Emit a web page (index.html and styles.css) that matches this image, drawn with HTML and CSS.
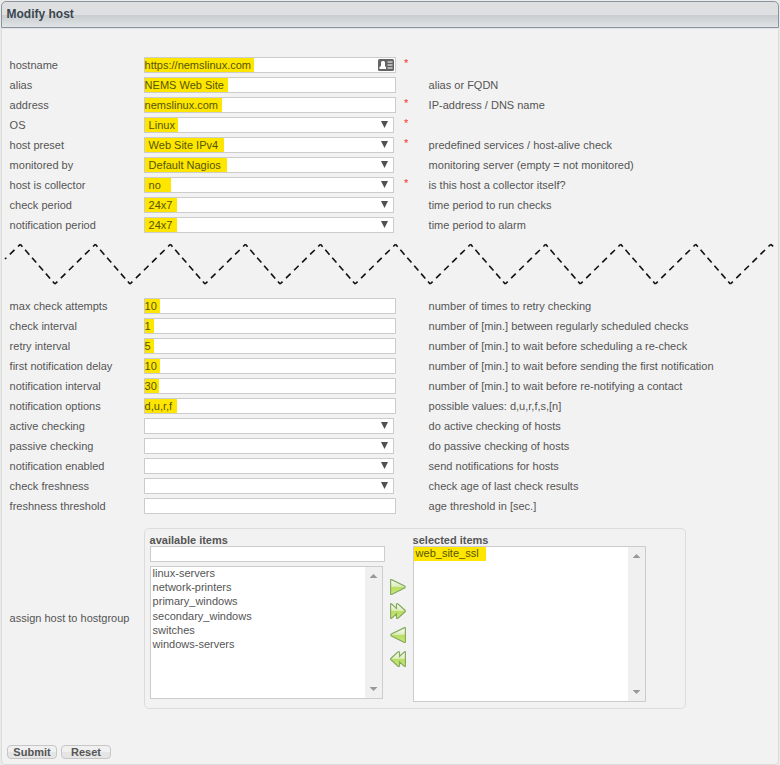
FILE: index.html
```html
<!DOCTYPE html>
<html lang="en">
<head>
<meta charset="utf-8">
<title>Modify host</title>
<link rel="stylesheet" href="styles.css">
</head>
<body>
<main class="panel">
<h1 class="head">Modify host</h1>
<form class="body">
<section class="rows">
<div class="row"><label>hostname</label><div class="input"><mark class="w109">https://nemslinux.com</mark><svg class="card" width="16" height="12" viewBox="0 0 16 12"><rect width="16" height="12" rx="1.5" fill="#646464"/><path d="M1.5 10V8L3 7V3.2L4 2h2l1 1.2V7L8 8v2zM9.5 2.5h5v1h-5zM9.5 5.5h5v1h-5zM9.5 8.5h5v1h-5z" fill="#fff"/></svg></div><b>*</b><span></span></div>
<div class="row"><label>alias</label><div class="input"><mark class="w83">NEMS Web Site</mark></div><b></b><span>alias or FQDN</span></div>
<div class="row"><label>address</label><div class="input"><mark class="w77">nemslinux.com</mark></div><b>*</b><span>IP-address / DNS name</span></div>
<div class="row"><label>OS</label><div class="input select"><mark class="w33">Linux</mark></div><b>*</b><span></span></div>
<div class="row"><label>host preset</label><div class="input select"><mark class="w79">Web Site IPv4</mark></div><b>*</b><span>predefined services / host-alive check</span></div>
<div class="row"><label>monitored by</label><div class="input select"><mark class="w82">Default Nagios</mark></div><b></b><span>monitoring server (empty = not monitored)</span></div>
<div class="row"><label>host is collector</label><div class="input select"><mark class="w26">no</mark></div><b>*</b><span>is this host a collector itself?</span></div>
<div class="row"><label>check period</label><div class="input select"><mark class="w32">24x7</mark></div><b></b><span>time period to run checks</span></div>
<div class="row"><label>notification period</label><div class="input select"><mark class="w32">24x7</mark></div><b></b><span>time period to alarm</span></div>
</section>
<svg class="zigzag" width="776" height="61" viewBox="2 235 776 61"></svg>
<section class="rows">
<div class="row"><label>max check attempts</label><div class="input"><mark class="w15">10</mark></div><b></b><span>number of times to retry checking</span></div>
<div class="row"><label>check interval</label><div class="input"><mark class="w9">1</mark></div><b></b><span>number of [min.] between regularly scheduled checks</span></div>
<div class="row"><label>retry interval</label><div class="input"><mark class="w9">5</mark></div><b></b><span>number of [min.] to wait before scheduling a re-check</span></div>
<div class="row"><label>first notification delay</label><div class="input"><mark class="w15">10</mark></div><b></b><span>number of [min.] to wait before sending the first notification</span></div>
<div class="row"><label>notification interval</label><div class="input"><mark class="w14">30</mark></div><b></b><span>number of [min.] to wait before re-notifying a contact</span></div>
<div class="row"><label>notification options</label><div class="input"><mark class="w32">d,u,r,f</mark></div><b></b><span>possible values: d,u,r,f,s,[n]</span></div>
<div class="row"><label>active checking</label><div class="input select"></div><b></b><span>do active checking of hosts</span></div>
<div class="row"><label>passive checking</label><div class="input select"></div><b></b><span>do passive checking of hosts</span></div>
<div class="row"><label>notification enabled</label><div class="input select"></div><b></b><span>send notifications for hosts</span></div>
<div class="row"><label>check freshness</label><div class="input select"></div><b></b><span>check age of last check results</span></div>
<div class="row"><label>freshness threshold</label><div class="input"></div><b></b><span>age threshold in [sec.]</span></div>
</section>
<section class="assign">
<label>assign host to hostgroup</label>
<div class="box">
<div class="available"><strong>available items</strong><div class="input search"></div>
<div class="list"><ul><li>linux-servers</li><li>network-printers</li><li>primary_windows</li><li>secondary_windows</li><li>switches</li><li>windows-servers</li></ul><div class="scroll"><i></i><i class="down"></i></div></div></div>
<div class="arrows">
<svg width="16" height="16" viewBox="0 0 16 16"><defs><linearGradient id="g" x1="0" y1="0" x2="0" y2="1"><stop offset="0" stop-color="#fff"/><stop offset=".48" stop-color="#d9ecb4"/><stop offset=".5" stop-color="#b9de60"/><stop offset="1" stop-color="#c9e87c"/></linearGradient></defs><path id="one" d="M.6 1Q.6 .3 1.5 .6L14.6 7Q15.7 8 14.6 9L1.5 15.5Q.6 15.8 .6 15Z"/></svg>
<svg width="16" height="16" viewBox="0 0 16 16"><path id="two" d="M.6 1Q.7 .4 1.4 .8L6.5 5.5V1Q7 .3 8 1L15 7.2Q15.8 8 15 8.8L8 15.3Q7 15.8 6.5 15V10.8L1.4 15.4Q.7 15.8 .6 15Z"/></svg>
<svg width="16" height="16" viewBox="0 0 16 16"><use href="#one" transform="matrix(-1 0 0 1 16 0)"/></svg>
<svg width="16" height="16" viewBox="0 0 16 16"><use href="#two" transform="matrix(-1 0 0 1 16 0)"/></svg>
</div>
<div class="selected"><strong>selected items</strong>
<div class="list"><ul><li><mark>web_site_ssl</mark></li></ul><div class="scroll"><i></i><i class="down"></i></div></div></div>
</div>
</section>
<div class="buttons"><button type="button">Submit</button><button type="button">Reset</button></div>
</form>
</main>
<script src="zigzag.js"></script>
</body>
</html>
```
FILE: zigzag.js
```js
// Each slope is its own subpath so that a dash is centred on every corner.
const period = 75.05, top0 = 244.3, bottom0 = 284;
let up = "M20.3 244.3L5 259", down = "";
for (let i = 0; i < 10; i++) {
  const x = 20.3 + i * period;
  down += `M${x} ${top0}L${x + 34.6} ${bottom0}`;
  up += `M${x + period} ${top0}L${x + 34.6} ${bottom0}`;
}
down += "M770.8 244.3L776 249";
document.querySelector(".zigzag").innerHTML =
  `<path class="up" d="${up}"/><path class="down" d="${down}"/>`;
```
FILE: styles.css
```css
* { box-sizing: border-box; }
body { margin: 0; padding: 1px; background: #e9ebe8; font: 11px/20px "Liberation Sans", Arial, sans-serif; color: #555; }
.panel { height: 764px; width: 778px; }
.head { margin: 0; height: 27px; padding-left: 4.5px; border: 1px solid #8c92a0; border-radius: 5px 5px 0 0; background: linear-gradient(#dddfe1 0 13px, #c8cccf 13px, #e1e6e8 26px); font-size: 12px; line-height: 24px; font-weight: bold; color: #3c4650; }
.body { height: 737px; margin: 0; padding-top: 27px; border: 1px solid #dcdcdc; border-top-color: #e0e3e3; border-radius: 0 0 5px 5px; background: #f2f2f2; display: flex; flex-direction: column; }
.rows { padding-left: 8px; margin-top: -1px; }
.row { display: grid; grid-template-columns: 134px 260px 25px 1fr; height: 20px; }
.row label, .row span, .assign label { text-indent: -.4px; }
.row b { color: #f32; font-weight: normal; line-height: 16px; }
.input { width: 252px; height: 16px; margin-top: 2px; border: 1px solid #ccc; background: #fff; display: flex; line-height: 15px; }
.select { width: 250px; justify-content: space-between; }
.select::after { content: ""; width: 7px; height: 7px; margin: 3px 5px 0 auto; background: #505050; clip-path: polygon(0 0, 100% 0, 50% 100%); }
mark { background: #ffe600; color: #555500; white-space: nowrap; height: 14px; text-indent: -.4px; }
.select mark { padding-left: 4px; }
.w109 { width: 109px; } .w83 { width: 83px; } .w77 { width: 77px; } .w33 { width: 33px; } .w79 { width: 79px; } .w82 { width: 82px; } .w26 { width: 26px; } .w32 { width: 32px; } .w15 { width: 15px; } .w14 { width: 14px; } .w9 { width: 9px; }
.card { margin: 1px 1px 0 auto; }
.zigzag { display: block; flex: none; margin-bottom: 1px; fill: none; stroke: #111; stroke-width: 1.6; }
.zigzag .up { stroke-dasharray: 6.4 4.88; stroke-dashoffset: 3.2; }
.zigzag .down { stroke-dasharray: 6.4 4.13; stroke-dashoffset: 3.2; }
.assign { display: flex; align-items: center; margin: 12px 0 0 8px; }
.assign label { width: 134px; margin-top: -2px; }
.box { width: 542px; height: 181px; border: 1px solid #dcdcdc; border-radius: 5px; padding: 5px; display: flex; }
.box strong { display: block; height: 12px; line-height: 13px; text-indent: -.4px; }
.available { width: 240px; }
.search { width: 235px; margin: 0 0 4px; }
.list { width: 233px; height: 133px; border: 1px solid #ccc; background: #fff; display: flex; }
.selected .list { height: 156px; }
.list ul { margin: 0; padding: 0; flex: 1; list-style: none; }
.list li { height: 14.2px; line-height: 13px; padding-left: 2px; text-indent: -.4px; }
.list mark { display: block; width: 72px; margin-left: -2px; padding-left: 2px; }
.scroll { width: 17px; background: #f0f0f0; display: flex; flex-direction: column; justify-content: space-between; align-items: center; padding: 7px 0; }
.scroll i { width: 8px; height: 4px; background: #999; clip-path: polygon(50% 0, 100% 100%, 0 100%); }
.scroll .down { clip-path: polygon(0 0, 100% 0, 50% 100%); }
.arrows { width: 23px; padding-top: 45px; display: flex; flex-direction: column; gap: 8px; }
.arrows path { fill: url(#g); stroke: #86aa60; stroke-width: 1.2; }
.buttons { display: flex; gap: 4px; margin: 36px 0 0 5px; }
button { width: 50px; height: 14px; padding: 0; border: 1px solid #c6c6c6; border-radius: 4px; background: linear-gradient(#f0f0f0 50%, #e5e5e5 50%); font: bold 11px/12px "Liberation Sans", Arial, sans-serif; color: #555; }
```
